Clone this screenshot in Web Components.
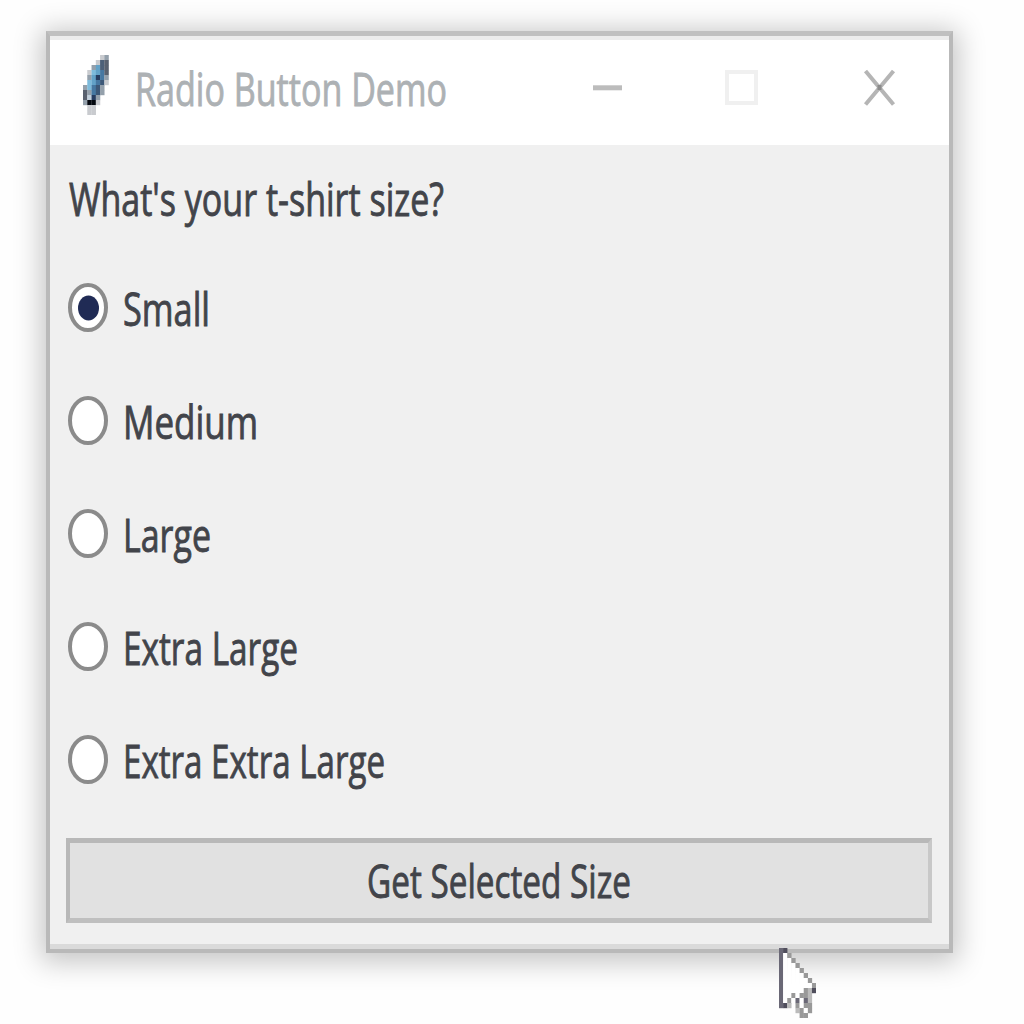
<!DOCTYPE html>
<html lang="en">
<head>
<meta charset="utf-8">
<title>Radio Button Demo</title>
<style>
html,body{margin:0;width:1024px;height:1024px;overflow:hidden;background:#fefefe}
body{font-family:"Open Sans","Noto Sans",sans-serif}
</style>
</head>
<body>
<demo-desktop></demo-desktop>
<script>
const define = (name, html) => customElements.define(name, class extends HTMLElement {
  connectedCallback() {
    if (this.shadowRoot) return;
    const root = this.attachShadow({mode: 'open'});
    root.innerHTML = typeof html === 'function' ? html(this) : html;
  }
});

// Condensed label: the line is fitted to the width attribute.
define('fit-text', el => {
  const w = el.getAttribute('w'), size = el.getAttribute('size') || 46;
  return `<style>:host{display:block;flex:none;width:${w}px;height:60px}
  svg{display:block;overflow:visible}
  text{font:${size}px "Open Sans","Noto Sans",sans-serif;fill:currentColor;stroke:currentColor;stroke-width:.9px}</style>
  <svg width="${w}" height="60"><text x="0" y="47" textLength="${w}" lengthAdjust="spacingAndGlyphs">${el.getAttribute('label')}</text></svg>`;
});

// Pixel art: each character of a row is a key of the palette, '.' is empty.
const pixels = (rows, palette, w, h) => {
  let s = '';
  rows.forEach((r, y) => [...r].forEach((c, x) => {
    if (palette[c]) s += `<rect x="${x}" y="${y}" width="1.04" height="1.04" fill="${palette[c]}"/>`;
  }));
  const n = rows[0].length;
  return `<svg width="${n * w}" height="${rows.length * h}" viewBox="0 0 ${n} ${rows.length}" preserveAspectRatio="none">${s}</svg>`;
};

define('feather-icon', () => `<style>:host{display:block;flex:none}svg{display:block}</style>` + pixels([
  '....lg',
  '...ldk',
  '..gcdk',
  '.lbcek',
  '.gcneg',
  '.bceml',
  'gbemg.',
  'kgemg.',
  'kwng..',
  'gxxl..',
  '.ll...',
  '.ll...'
], {l:'#c9cbcf',g:'#94a0ab',d:'#4d6078',k:'#59616f',c:'#62a2c8',b:'#7dbbdc',e:'#4678a2',n:'#263d61',m:'#3c5878',w:'#c0cedb',x:'#03080f'}, 4.27, 5));

define('mouse-pointer', () => `<style>:host{display:block;position:absolute;left:779px;top:948px}svg{display:block}</style>` + pixels([
  'dk.......',
  'dwg......',
  'dwwg.....',
  'dwwwg....',
  'dwwwwg...',
  'dwwwwwg..',
  'dwwwwwwg.',
  'dwwwwwwwg',
  'dwwwwwglk',
  'dwwgwggl.',
  'dwgwdwdl.',
  'dkl.gwgg.',
  '....lgwg.',
  '.....gg..'
], {d:'#6a6876',k:'#504e5c',g:'#999',l:'#bbb',w:'#fff'}, 4.12, 5));

define('title-bar', `<style>
:host{display:flex;height:105px;background:#fff;color:#adb1b4;align-items:flex-start}
feather-icon{margin:15px 0 0 33px}
fit-text{margin:19px 0 0 26px}
.controls{display:flex;margin:27px 0 0 145px;gap:102px}
svg{display:block}
</style>
<feather-icon></feather-icon>
<fit-text w="312" label="Radio Button Demo"></fit-text>
<div class="controls">
<svg width="31" height="42"><path d="M1 20.8H30" stroke="#bcbcbc" stroke-width="5"/></svg>
<svg width="33" height="42"><rect x="2" y="5" width="29" height="31" fill="none" stroke="#f0f0f0" stroke-width="4"/></svg>
<svg width="37" height="42"><path d="M5.500 4L33.500 37.500M33.500 4L5.500 37.500" stroke="#b5b5b5" stroke-width="4"/><path d="M17.500 18h4v5h-4z" fill="#8c8c8c"/></svg>
</div>`);

define('size-option', el => `<style>
:host{display:flex;flex:none;align-items:flex-start;height:113px;gap:14px}
svg{display:block;flex:none}
fit-text{margin-top:-3px}
</style>
<svg width="42" height="51" viewBox="0 0 42 51"><ellipse cx="21" cy="25.500" rx="18" ry="22.500" fill="#fff" stroke="#8b8b8b" stroke-width="4"/>
${el.hasAttribute('checked') ? '<ellipse cx="21.500" cy="26" rx="10.500" ry="12.500" fill="#202b55"/>' : ''}</svg>
<fit-text w="${el.getAttribute('w')}" label="${el.getAttribute('label')}"></fit-text>`);

define('push-button', el => `<style>
:host{display:flex;box-sizing:border-box;height:85px;border:4px solid #b8b8b8;border-top-width:5px;border-bottom:5px solid #bfbfbf;border-right-color:#c8c8c8;background:#e1e1e1;justify-content:center}
fit-text{margin-top:8px}
</style><fit-text w="${el.getAttribute('w')}" label="${el.getAttribute('label')}"></fit-text>`);

define('app-window', `<style>
:host{display:flex;flex-direction:column;box-sizing:border-box;width:907px;height:922px;border:4px solid #b9b9b9;border-top:5px solid #c0c0c0;background:#f0f0f0;box-shadow:0 4px 26px 5px rgba(0,0,0,.23)}
.edge{height:4px;background:#ececec;flex:none}
.edge.bottom{height:5px;margin-top:auto;background:#dadada}
title-bar{flex:none}
.body{display:flex;flex-direction:column;padding:0 17px 0 16px;color:#42444a}
.question{margin:24px 0 0 3px}
.options{display:flex;flex-direction:column;padding:53px 0 0 1px;height:556px}
</style>
<div class="edge"></div>
<title-bar></title-bar>
<div class="body">
<fit-text class="question" w="375" label="What's your t-shirt size?"></fit-text>
<div class="options">
<size-option checked w="87" label="Small"></size-option>
<size-option w="135" label="Medium"></size-option>
<size-option w="88" label="Large"></size-option>
<size-option w="175" label="Extra Large"></size-option>
<size-option w="262" label="Extra Extra Large"></size-option>
</div>
<push-button w="264" label="Get Selected Size"></push-button>
</div>
<div class="edge bottom"></div>`);

define('demo-desktop', `<style>
:host{display:block;box-sizing:border-box;position:relative;width:1024px;height:1024px;padding:31px 0 0 46px;overflow:hidden}
</style><app-window></app-window><mouse-pointer></mouse-pointer>`);
</script>
</body>
</html>
